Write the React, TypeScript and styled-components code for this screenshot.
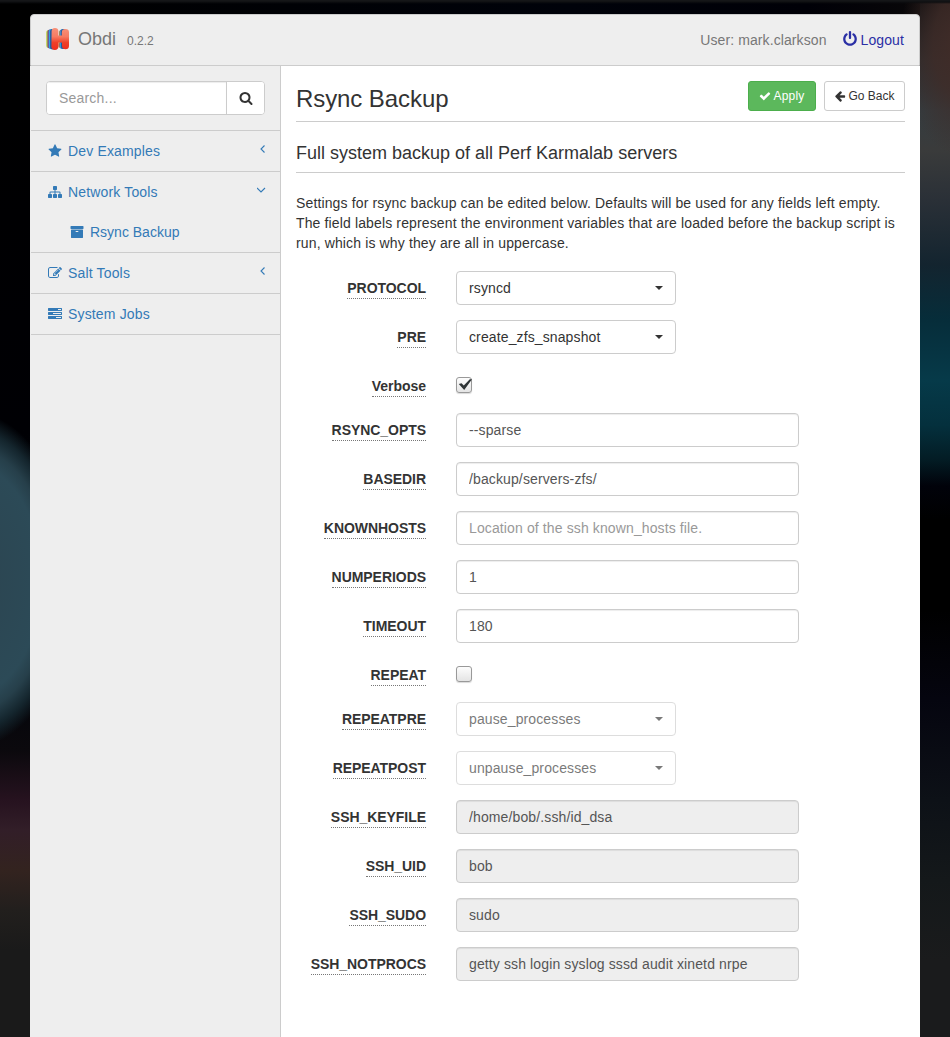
import React from "react";
import styled, { createGlobalStyle, css } from "styled-components";

const GlobalStyle = createGlobalStyle`
  *, *::before, *::after { box-sizing: border-box; }
  html { background: #000; }
  body {
    margin: 0;
    height: 1037px;
    overflow: hidden;
    color: #333;
    font: 14px/20px "Liberation Sans", Arial, sans-serif;
    background:
      linear-gradient(#151618 0 1px, #0d0e10 2px, transparent 4px),
      radial-gradient(ellipse 60px 110px at 960px 45px, #402c28 0, #402c28cc 45%, transparent 100%),
      linear-gradient(#0b0b0d 0, #2a2c2e 60px, #343c40 110px, #3a3b3b 150px, #2a3037 200px, #13242f 265px, #062d3a 320px, #063a49 380px, #04303d 425px, #031c24 460px, #01020a 486px, #000 520px, #000 610px, #05050f 700px, #0d1117 800px, #14181a 880px, #1a1b1c 960px, #1a1b1c 100%) 100% 0 / 30px 100% no-repeat,
      radial-gradient(ellipse 105px 163px at -34px 580px, #2c4450 0, #2c4a57 72%, #263f4a 82%, #14252d 93%, transparent 104%),
      linear-gradient(#000 0, #000004 430px, #05060b 700px, #0b090d 750px, #26121f 800px, #321e28 830px, #33231f 870px, #221f1d 910px, #1a1a1a 950px, #1a1a1a 100%) 0 0 / 30px 100% no-repeat,
      linear-gradient(90deg, #000, #00020a 60%, #000007 85%, #0b0909);
  }
`;

const Page = styled.div`
  display: flex;
  flex-direction: column;
  width: 890px;
  height: 1037px;
  padding-top: 14px;
  margin: 0 auto;
`;

const Navbar = styled.header`
  display: flex;
  align-items: center;
  height: 52px;
  flex: none;
  padding: 0 15px;
  background: #eee;
  border: 1px solid #ccc;
  border-radius: 4px 4px 0 0;
  color: #777;
`;

const Brand = styled.div`
  display: flex;
  align-items: baseline;
  margin-left: 8px;
  font-size: 18px;
`;

const Version = styled.span`
  margin-left: 11px;
  font-size: 12px;
`;

const UserArea = styled.div`
  display: flex;
  align-items: center;
  margin-left: auto;
  gap: 15px;
  letter-spacing: 0.1px;
`;

const Logout = styled.a`
  display: flex;
  align-items: center;
  gap: 3px;
  color: #2a2fa5;

  svg { margin-bottom: 3px; }
`;

const Columns = styled.div`
  display: flex;
  flex: 1;
  min-height: 0;
`;

const Sidebar = styled.aside`
  width: 251px;
  flex: none;
  background: #eee;
  border-right: 1px solid #ccc;
`;

const SearchBox = styled.form`
  display: flex;
  margin: 15px 15px 15px 16px;
  height: 34px;
  background: #fff;
  border: 1px solid #ccc;
  border-radius: 4px;
  overflow: hidden;
`;

const SearchInput = styled.input`
  flex: 1;
  min-width: 0;
  padding: 0 12px;
  border: 0;
  outline: 0;
  font: inherit;
  letter-spacing: 0.2px;
  box-shadow: inset 0 1px 1px rgba(0, 0, 0, 0.075);
  &::placeholder { color: #999; opacity: 1; }
`;

const SearchButton = styled.button`
  display: flex;
  align-items: center;
  justify-content: center;
  width: 38px;
  padding: 0;
  border: 0;
  border-left: 1px solid #ccc;
  background: #fff;
  color: #333;
`;

const Menu = styled.ul`
  margin: 0 0 0 1px;
  padding: 0;
  list-style: none;
  border-top: 1px solid #ccc;
`;

const MenuGroup = styled.li`
  border-bottom: 1px solid #ccc;
`;

const MenuLink = styled.a<{ $nested?: boolean }>`
  display: flex;
  align-items: center;
  height: 40px;
  gap: 6px;
  padding: 0 13px 0 ${(p) => (p.$nested ? 39 : 17)}px;
  color: #337ab7;
  letter-spacing: ${(p) => (p.$nested ? 0 : 0.16)}px;
`;

const Arrow = styled.svg`
  width: 10px;
  height: 10px;
  margin: 0 0 5px auto;
  fill: none;
  stroke: currentColor;
  stroke-width: 1.1;
`;

const Main = styled.main`
  flex: 1;
  padding: 15px 15px 0;
  background: #fff;
`;

const Heading = styled.div`
  display: flex;
  justify-content: space-between;
  height: 41px;
  border-bottom: 1px solid #ccc;
`;

const Title = styled.h1`
  margin: 4px 0 0;
  font-size: 24px;
  font-weight: 400;
  line-height: 28px;
  letter-spacing: -0.08px;
`;

const Actions = styled.div`
  display: flex;
  gap: 8px;
`;

const Button = styled.button<{ $primary?: boolean }>`
  display: flex;
  align-items: center;
  justify-content: center;
  gap: 2px;
  width: ${(p) => (p.$primary ? 68 : 81)}px;
  height: 30px;
  padding: 0;
  border: 1px solid ${(p) => (p.$primary ? "#4cae4c" : "#ccc")};
  border-radius: 3px;
  background: ${(p) => (p.$primary ? "#5cb85c" : "#fff")};
  color: ${(p) => (p.$primary ? "#fff" : "#333")};
  font: 12px/18px "Liberation Sans", Arial, sans-serif;
  letter-spacing: ${(p) => (p.$primary ? 0.2 : 0)}px;
`;

const Subtitle = styled.h2`
  height: 51px;
  margin: 0;
  padding-top: 21px;
  border-bottom: 1px solid #ccc;
  font-size: 18px;
  font-weight: 400;
  line-height: 20px;
`;

const Intro = styled.p`
  margin: 20px 0 18px;
  white-space: pre-line;
  letter-spacing: 0.135px;
`;

const Row = styled.div<{ $short?: boolean }>`
  display: grid;
  grid-template-columns: 130px 1fr;
  column-gap: 30px;
  height: ${(p) => (p.$short ? 29 : 34)}px;
  margin-bottom: 15px;
`;

const Label = styled.label`
  justify-self: end;
  height: 21px;
  margin-top: 7px;
  border-bottom: 1px dotted #777;
  font-weight: 700;
  letter-spacing: -0.05px;
`;

const control = css`
  height: 34px;
  border: 1px solid #ccc;
  border-radius: 4px;
  font: inherit;
  letter-spacing: 0.12px;
  padding: 0 12px;
`;

const Input = styled.input`
  ${control}
  width: 343px;
  background: #fff;
  color: #555;
  box-shadow: inset 0 1px 1px rgba(0, 0, 0, 0.075);
  &::placeholder { color: #999; opacity: 1; }
  &:disabled { background: #eee; }
`;

const Select = styled.button`
  ${control}
  display: flex;
  align-items: center;
  justify-content: space-between;
  width: 220px;
  background: #fff;
  color: #333;
  &:disabled { opacity: 0.65; }
  &::after {
    content: "";
    border: 4px solid transparent;
    border-top-color: currentColor;
    border-bottom: 0;
  }
`;

const Checkbox = styled.span`
  display: flex;
  width: 16px;
  height: 16px;
  margin-top: 8px;
  border: 1px solid #999;
  border-radius: 3px;
  background: linear-gradient(#fdfdfd, #e4e4e4);
  box-shadow: 0 1px 1px rgba(0, 0, 0, 0.15);
`;

const Tick = styled.svg`
  width: 14px;
  height: 14px;
  fill: #2e3436;
  overflow: visible;
`;

const glyphs = {
  star: "M1728 647q0 22-26 48l-363 354 86 500q1 7 1 20 0 21-10.5 35.5t-30.5 14.5q-19 0-40-12l-449-236-449 236q-22 12-40 12-21 0-31.5-14.5t-10.5-35.5q0-6 2-20l86-500-364-354q-25-27-25-48 0-37 56-46l502-73 225-455q19-41 49-41t49 41l225 455 502 73q56 9 56 46z",
  sitemap: "M1792 1248v320q0 40-28 68t-68 28h-320q-40 0-68-28t-28-68v-320q0-40 28-68t68-28h96v-192h-512v192h96q40 0 68 28t28 68v320q0 40-28 68t-68 28h-320q-40 0-68-28t-28-68v-320q0-40 28-68t68-28h96v-192h-512v192h96q40 0 68 28t28 68v320q0 40-28 68t-68 28h-320q-40 0-68-28t-28-68v-320q0-40 28-68t68-28h96v-192q0-52 38-90t90-38h512v-192h-96q-40 0-68-28t-28-68v-320q0-40 28-68t68-28h320q40 0 68 28t28 68v320q0 40-28 68t-68 28h-96v192h512q52 0 90 38t38 90v192h96q40 0 68 28t28 68z",
  archive: "M1088 832q0-26-19-45t-45-19h-256q-26 0-45 19t-19 45 19 45 45 19h256q26 0 45-19t19-45zm576-192v960q0 26-19 45t-45 19h-1408q-26 0-45-19t-19-45v-960q0-26 19-45t45-19h1408q26 0 45 19t19 45zm64-448v256q0 26-19 45t-45 19h-1536q-26 0-45-19t-19-45v-256q0-26 19-45t45-19h1536q26 0 45 19t19 45z",
  edit: "M888 1184l116-116-152-152-116 116v56h96v96h56zm440-720q-16-16-33 1l-350 350q-17 17-1 33t33-1l350-350q17-17 1-33zm80 594v190q0 119-84.5 203.5t-203.5 84.5h-832q-119 0-203.5-84.5t-84.5-203.5v-832q0-119 84.5-203.5t203.5-84.5h832q63 0 117 25 15 7 18 23 3 17-9 29l-49 49q-14 14-32 8-23-6-45-6h-832q-66 0-113 47t-47 113v832q0 66 47 113t113 47h832q66 0 113-47t47-113v-126q0-13 9-22l64-64q15-15 35-7t20 29zm-96-738l288 288-672 672h-288v-288zm444 132l-92 92-288-288 92-92q28-28 68-28t68 28l152 152q28 28 28 68t-28 68z",
  tasks: "M1024 1408h640v-128h-640v128zm-384-512h1024v-128h-1024v128zm640-512h384v-128h-384v128zm512 832v256q0 26-19 45t-45 19h-1664q-26 0-45-19t-19-45v-256q0-26 19-45t45-19h1664q26 0 45 19t19 45zm0-512v256q0 26-19 45t-45 19h-1664q-26 0-45-19t-19-45v-256q0-26 19-45t45-19h1664q26 0 45 19t19 45zm0-512v256q0 26-19 45t-45 19h-1664q-26 0-45-19t-19-45v-256q0-26 19-45t45-19h1664q26 0 45 19t19 45z",
  search: "M1216 832q0-185-131.5-316.5t-316.5-131.5-316.5 131.5-131.5 316.5 131.5 316.5 316.5 131.5 316.5-131.5 131.5-316.5zm512 832q0 52-38 90t-90 38q-54 0-90-38l-343-342q-179 124-399 124-143 0-273.5-55.5t-225-150-150-225-55.5-273.5 55.5-273.5 150-225 225-150 273.5-55.5 273.5 55.5 225 150 150 225 55.5 273.5q0 220-124 399l343 343q37 37 37 90z",
  power: "M1664 896q0 156-61 298t-164 245-245 164-298 61-298-61-245-164-164-245-61-298q0-182 80.5-343t226.5-270q43-32 95.5-25t83.5 50q32 42 24.5 94.5t-49.5 84.5q-98 74-151.5 181t-53.5 228q0 104 40.5 198.5t109.5 163.5 163.5 109.5 198.5 40.5 198.5-40.5 163.5-109.5 109.5-163.5 40.5-198.5q0-121-53.5-228t-151.5-181q-42-32-49.5-84.5t24.5-94.5q31-43 84-50t95 25q146 109 226.5 270t80.5 343zm-640-768v640q0 52-38 90t-90 38-90-38-38-90v-640q0-52 38-90t90-38 90 38 38 90z",
  check: "M1671 566q0 40-28 68l-724 724-136 136q-28 28-68 28t-68-28l-136-136-362-362q-28-28-28-68t28-68l136-136q28-28 68-28t68 28l294 295 656-657q28-28 68-28t68 28l136 136q28 28 28 68z",
  back: "M1664 896v128q0 53-32.5 90.5t-84.5 37.5h-704l293 294q38 36 38 90t-38 90l-75 76q-37 37-90 37-52 0-91-37l-651-652q-37-37-37-90 0-52 37-91l651-650q38-38 91-38 52 0 90 38l75 74q38 38 38 91t-38 91l-293 293h704q52 0 84.5 37.5t32.5 90.5z",
};

type GlyphName = keyof typeof glyphs;

const Glyph = styled.svg<{ $size: number }>`
  flex: none;
  width: ${(p) => p.$size}px;
  height: ${(p) => p.$size}px;
  fill: currentColor;
`;

const Icon = ({ name, size = 14 }: { name: GlyphName; size?: number }) => (
  <Glyph $size={size} viewBox="0 0 1792 1792">
    <path d={glyphs[name]} />
  </Glyph>
);

const LogoSvg = styled.svg`
  width: 24px;
  height: 24px;
  margin-top: -3px;
`;

const Logo = () => (
  <LogoSvg viewBox="0 0 24 24">
    <defs>
      <linearGradient id="logoRed" x1="0" y1="0" x2="0" y2="24" gradientUnits="userSpaceOnUse">
        <stop offset="0" stopColor="#f7937c" />
        <stop offset=".4" stopColor="#f67b62" />
        <stop offset=".65" stopColor="#ef3f28" />
        <stop offset="1" stopColor="#ee2a1c" />
      </linearGradient>
    </defs>
    <g strokeLinecap="round" strokeWidth="5">
      <path d="M2.8 5.5V18.5M15.5 5.5V9M15 17V18.5" stroke="#b7cc35" />
      <path d="M4 5V19M16 5V9M15.8 17V19" stroke="#7b4a8c" />
      <path d="M5.3 4.5V19.5M16.8 4.5V9M16.5 17V19.5" stroke="#2da4e4" />
      <path d="M6.6 4.5V20M17.5 4.5V9M17.4 17V19.5" stroke="#24599b" />
    </g>
    <path
      d="M5.6 4Q5.8 1 9 1Q12.2 1 12.4 4V8.6H15.8V5Q16 2 19.4 2Q23 2 23 5.2V19Q22.8 22.2 19.6 22.2Q16.2 22.2 16 19V15.5H12.6V19.6Q12.2 23 8.9 23Q5.6 23 5.4 19.6Z"
      fill="url(#logoRed)"
    />
  </LogoSvg>
);

interface MenuEntry {
  icon: GlyphName;
  label: string;
  arrow?: "left" | "down";
  children?: MenuEntry[];
}

const menu: MenuEntry[] = [
  { icon: "star", label: "Dev Examples", arrow: "left" },
  { icon: "sitemap", label: "Network Tools", arrow: "down", children: [{ icon: "archive", label: "Rsync Backup" }] },
  { icon: "edit", label: "Salt Tools", arrow: "left" },
  { icon: "tasks", label: "System Jobs" },
];

interface Field {
  name: string;
  kind: "select" | "text" | "check";
  value?: string;
  placeholder?: string;
  checked?: boolean;
  disabled?: boolean;
}

const fields: Field[] = [
  { name: "PROTOCOL", kind: "select", value: "rsyncd" },
  { name: "PRE", kind: "select", value: "create_zfs_snapshot" },
  { name: "Verbose", kind: "check", checked: true },
  { name: "RSYNC_OPTS", kind: "text", value: "--sparse" },
  { name: "BASEDIR", kind: "text", value: "/backup/servers-zfs/" },
  { name: "KNOWNHOSTS", kind: "text", placeholder: "Location of the ssh known_hosts file." },
  { name: "NUMPERIODS", kind: "text", value: "1" },
  { name: "TIMEOUT", kind: "text", value: "180" },
  { name: "REPEAT", kind: "check" },
  { name: "REPEATPRE", kind: "select", value: "pause_processes", disabled: true },
  { name: "REPEATPOST", kind: "select", value: "unpause_processes", disabled: true },
  { name: "SSH_KEYFILE", kind: "text", value: "/home/bob/.ssh/id_dsa", disabled: true },
  { name: "SSH_UID", kind: "text", value: "bob", disabled: true },
  { name: "SSH_SUDO", kind: "text", value: "sudo", disabled: true },
  { name: "SSH_NOTPROCS", kind: "text", value: "getty ssh login syslog sssd audit xinetd nrpe", disabled: true },
];

const Control = ({ field }: { field: Field }) => {
  if (field.kind === "select") return <Select disabled={field.disabled}>{field.value}</Select>;
  if (field.kind === "check")
    return (
      <Checkbox role="checkbox" aria-checked={!!field.checked}>
        {field.checked && (
          <Tick viewBox="0 0 14 14">
            <path d="M1.8 6L4.5 5.2L6.8 7.6L12.8 1.2H15L7.2 12Z" />
          </Tick>
        )}
      </Checkbox>
    );
  return <Input defaultValue={field.value} placeholder={field.placeholder} disabled={field.disabled} />;
};

const MenuArrow = ({ direction }: { direction: "left" | "down" }) => (
  <Arrow viewBox="0 0 10 10">
    <path d={direction === "left" ? "M7.5 1.5L4 5L7.5 8.5" : "M0 3L4 7L8 3"} />
  </Arrow>
);

export default function App() {
  return (
    <>
      <GlobalStyle />
      <Page>
        <Navbar>
          <Logo />
          <Brand>
            Obdi<Version>0.2.2</Version>
          </Brand>
          <UserArea>
            <span>User: mark.clarkson</span>
            <Logout>
              <Icon name="power" size={16} />
              Logout
            </Logout>
          </UserArea>
        </Navbar>
        <Columns>
          <Sidebar>
            <SearchBox>
              <SearchInput placeholder="Search..." />
              <SearchButton type="button" aria-label="Search">
                <Icon name="search" />
              </SearchButton>
            </SearchBox>
            <Menu>
              {menu.map((entry) => (
                <MenuGroup key={entry.label}>
                  <MenuLink>
                    <Icon name={entry.icon} />
                    {entry.label}
                    {entry.arrow && <MenuArrow direction={entry.arrow} />}
                  </MenuLink>
                  {entry.children?.map((child) => (
                    <MenuLink key={child.label} $nested>
                      <Icon name={child.icon} />
                      {child.label}
                    </MenuLink>
                  ))}
                </MenuGroup>
              ))}
            </Menu>
          </Sidebar>
          <Main>
            <Heading>
              <Title>Rsync Backup</Title>
              <Actions>
                <Button $primary>
                  <Icon name="check" size={12} />
                  Apply
                </Button>
                <Button>
                  <Icon name="back" size={12} />
                  Go Back
                </Button>
              </Actions>
            </Heading>
            <Subtitle>Full system backup of all Perf Karmalab servers</Subtitle>
            <Intro>
              {"Settings for rsync backup can be edited below. Defaults will be used for any fields left empty.\nThe field labels represent the environment variables that are loaded before the backup script is\nrun, which is why they are all in uppercase."}
            </Intro>
            {fields.map((field) => (
              <Row key={field.name} $short={field.kind === "check"}>
                <Label>{field.name}</Label>
                <Control field={field} />
              </Row>
            ))}
          </Main>
        </Columns>
      </Page>
    </>
  );
}
